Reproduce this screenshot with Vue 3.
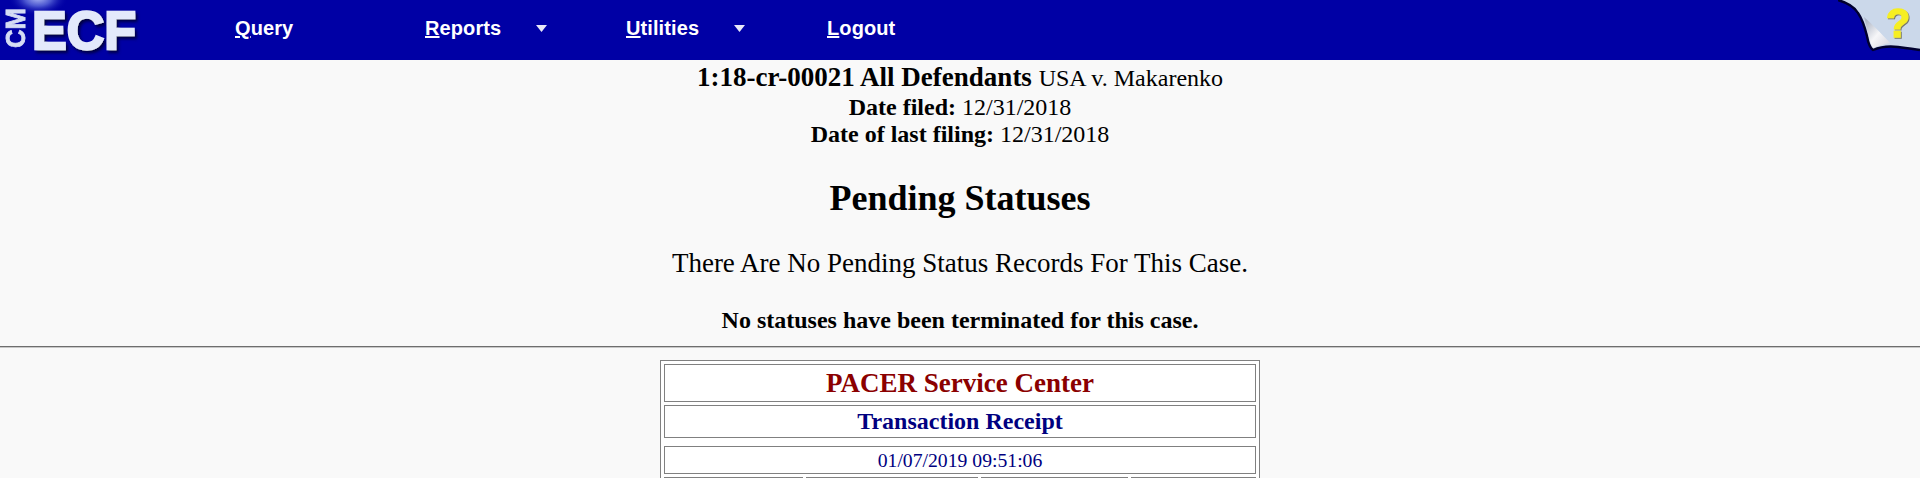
<script setup>
const menu = [
  { key: 'Q', rest: 'uery' },
  { key: 'R', rest: 'eports', arrow: true },
  { key: 'U', rest: 'tilities', arrow: true },
  { key: 'L', rest: 'ogout' },
]
const receiptCols = [138, 171, 147, 124]
</script>

<template>
  <div class="page">
    <header class="topbar">
      <svg class="logo" width="150" height="60" viewBox="0 0 150 60">
        <defs>
          <radialGradient id="glow" cx="0.5" cy="0.5" r="0.5">
            <stop offset="0" stop-color="#a9b4f2" />
            <stop offset="0.45" stop-color="#4a55d0" />
            <stop offset="1" stop-color="#0000a5" stop-opacity="0" />
          </radialGradient>
          <filter id="soft" x="-10%" y="-10%" width="125%" height="125%">
            <feGaussianBlur stdDeviation="0.5" />
          </filter>
          <filter id="shade" x="-10%" y="-10%" width="130%" height="130%">
            <feGaussianBlur stdDeviation="0.5" />
            <feDropShadow dx="2" dy="2.5" stdDeviation="1.4" flood-color="#00003f" />
          </filter>
        </defs>
        <rect width="150" height="60" fill="#0000a5" />
        <ellipse cx="38" cy="-2" rx="30" ry="18" fill="url(#glow)" />
        <text x="32" y="48.5" class="ecf" filter="url(#shade)" textLength="104" lengthAdjust="spacingAndGlyphs">ECF</text>
        <text class="cm" transform="translate(25 48) rotate(-90)" textLength="40" lengthAdjust="spacingAndGlyphs" filter="url(#soft)">CM</text>
      </svg>

      <nav class="menu">
        <a v-for="item in menu" :key="item.key" class="menu-item">
          <span class="menu-label"><u>{{ item.key }}</u>{{ item.rest }}</span>
          <svg v-if="item.arrow" class="caret" width="11" height="7" viewBox="0 0 11 7">
            <path d="M0 0H11L5.5 7Z" fill="#e8e8f8" />
          </svg>
        </a>
      </nav>

      <svg class="help" width="82" height="60" viewBox="0 0 82 60">
        <defs>
          <linearGradient id="curl" x1="0.1" y1="0.1" x2="0.9" y2="0.9">
            <stop offset="0" stop-color="#aeb6c6" />
            <stop offset="0.55" stop-color="#f6f6f8" />
            <stop offset="1" stop-color="#dcdce4" />
          </linearGradient>
          <filter id="helpsoft" x="-5%" y="-5%" width="110%" height="110%">
            <feGaussianBlur stdDeviation="0.5" />
          </filter>
          <filter id="qfx" x="-20%" y="-20%" width="150%" height="150%">
            <feGaussianBlur stdDeviation="0.4" />
            <feDropShadow dx="1" dy="1" stdDeviation="0.6" flood-color="#77776a" />
          </filter>
        </defs>
        <path d="M0 0C10 3 17 8 20 13C25 20 27 28 29 36C30 42 32 48 35 50C42 47 52 46 60 47C68 48 76 49 82 50V0Z" fill="#cbd8ea" filter="url(#helpsoft)" />
        <path d="M0 0C10 3 17 8 20 13C25 20 27 28 29 36C30 42 32 48 35 50C42 47 52 46 60 47C68 48 76 49 82 50" fill="none" stroke="#03032e" stroke-width="2.4" filter="url(#helpsoft)" />
        <path d="M26 17C34 24 44 34 52 43C46 44 40 46 35 48C31 42 30 30 26 17Z" fill="url(#curl)" />
        <text x="48" y="36.5" class="qmark" filter="url(#qfx)" textLength="24" lengthAdjust="spacingAndGlyphs">?</text>
      </svg>
    </header>

    <main class="content">
      <div class="case">
        <div class="case-title"><b>1:18-cr-00021 All Defendants</b> <span class="case-name">USA v. Makarenko</span></div>
        <div class="case-line"><b>Date filed:</b> 12/31/2018</div>
        <div class="case-line"><b>Date of last filing:</b> 12/31/2018</div>
      </div>

      <h2 class="heading">Pending Statuses</h2>
      <p class="empty">There Are No Pending Status Records For This Case.</p>
      <p class="terminated">No statuses have been terminated for this case.</p>
    </main>

    <hr class="rule" />

    <table class="receipt">
      <colgroup>
        <col v-for="w in receiptCols" :key="w" :style="{ width: w + 'px' }" />
      </colgroup>
      <tbody>
        <tr class="r-title"><td colspan="4">PACER Service Center</td></tr>
        <tr class="r-sub"><td colspan="4">Transaction Receipt</td></tr>
        <tr class="r-spacer"><th colspan="4"></th></tr>
        <tr class="r-date"><td colspan="4">01/07/2019 09:51:06</td></tr>
        <tr class="r-cells"><td></td><td></td><td></td><td></td></tr>
      </tbody>
    </table>
  </div>
</template>

<style>
html, body { margin: 0; overflow: hidden; background: #f9f9f9; }
</style>

<style scoped>
.page {
  height: 478px;
  overflow: hidden;
  background: #f9f9f9;
  color: #000;
  font-family: "Liberation Serif", "Times New Roman", serif;
}
.topbar {
  display: flex;
  align-items: stretch;
  height: 60px;
  background: #0000a5;
}
.logo { flex: none; display: block; }
.ecf {
  font-family: "Liberation Sans", Arial, sans-serif;
  font-weight: 700;
  font-size: 53px;
  fill: #e3e9fb;
  stroke: #e3e9fb;
  stroke-width: 2.4px;
}
.cm {
  font-family: "Liberation Sans", Arial, sans-serif;
  font-weight: 700;
  font-size: 27px;
  fill: #d5dcf4;
  stroke: #d5dcf4;
  stroke-width: 0.8px;
}
.menu {
  display: grid;
  grid-template-columns: 190px 201px 201px auto;
  align-items: center;
  margin-left: 85px;
  margin-bottom: 4px;
  font-family: "Liberation Sans", Arial, sans-serif;
  font-weight: 700;
  font-size: 20px;
  letter-spacing: 0.1px;
  color: #fff;
}
.menu-item { display: flex; align-items: center; }
.menu-label { white-space: nowrap; }
.caret { margin-left: 35px; margin-top: 1px; }
.help { flex: none; display: block; margin-left: auto; }
.qmark {
  font-family: "Liberation Sans", Arial, sans-serif;
  font-weight: 700;
  font-size: 40px;
  fill: #f6ee22;
  stroke: #f6ee22;
  stroke-width: 1.6px;
}
.content { text-align: center; }
.case { padding-top: 2px; }
.case-title { font-size: 27px; line-height: 31px; }
.case-name { font-size: 24px; }
.case-line { font-size: 24px; line-height: 27px; }
.heading {
  margin: 30px 0 0;
  font-size: 36px;
  line-height: 41px;
  font-weight: 700;
}
.empty {
  margin: 29px 0 0;
  font-size: 27px;
  line-height: 31px;
}
.terminated {
  margin: 27px 0 0;
  font-size: 24px;
  line-height: 28px;
  font-weight: 700;
}
.rule {
  margin: 12px 0 0;
  border: 0;
  border-top: 1px solid #6e6e6e;
  border-bottom: 1px solid #c8c8c8;
}
.receipt {
  width: 600px;
  margin: 12px auto 0;
  border: 1px solid #808080;
  border-spacing: 3px;
  table-layout: fixed;
  background: #fff;
}
.receipt td {
  border: 1px solid #808080;
  padding: 0;
  text-align: center;
}
.receipt th { padding: 0; height: 2px; }
.r-title td { height: 36px; font-size: 27px; font-weight: 700; color: #8b0000; }
.r-sub td { height: 31px; font-size: 24px; font-weight: 700; color: #000080; }
.r-date td { height: 26px; font-size: 19.7px; color: #000080; }
.r-cells td { height: 24px; }
</style>
